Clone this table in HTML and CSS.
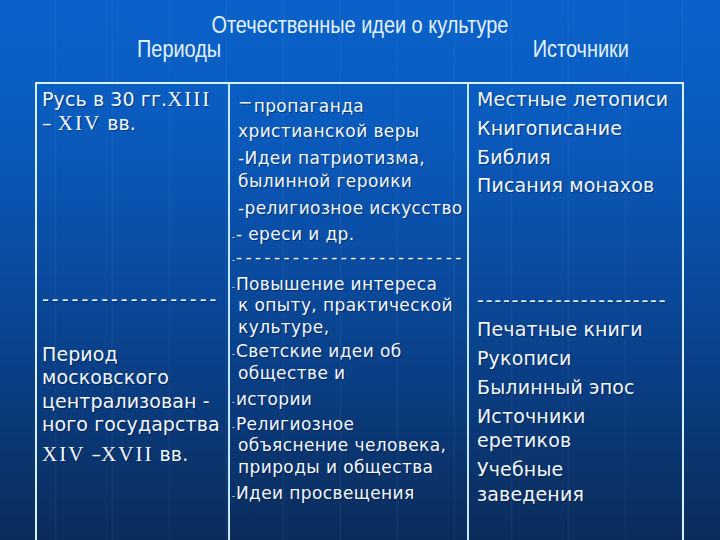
FILE: index.html
```html
<!DOCTYPE html>
<html lang="ru">
<head>
<meta charset="utf-8">
<title>Отечественные идеи о культуре</title>
<link rel="stylesheet" href="styles.css">
</head>
<body>
<div class="slide">
  <header class="head">
    <div class="title"><span class="nar">Отечественные идеи о культуре</span></div>
    <div class="subs"><span class="nar left">Периоды</span><span class="nar right">Источники</span></div>
  </header>
  <div class="table">
    <div class="col c1">
      <p class="l1">Русь в 30 гг.<span class="rn">XIII</span><br>– <span class="rn">XIV</span> вв.</p>
      <p class="dash d1">------------------</p>
      <p class="l2">Период<br>московского<br>централизован -<br>ного государства</p>
      <p class="l3"><span class="rn">XIV</span> –<span class="rn">XVII</span> вв.</p>
    </div>
    <div class="col c2">
      <p class="p1"><span class="hi">−</span>пропаганда<br>христианской веры</p>
      <p class="p2">-Идеи патриотизма,<br>былинной героики</p>
      <p class="p3">-религиозное искусство</p>
      <p class="p4"><span class="tick">-</span>- ереси и др.</p>
      <p class="dash d2"><span class="tick">-</span>------------------------</p>
      <p class="after"><span class="tick">-</span>Повышение интереса<br>к опыту, практической<br>культуре,</p>
      <p><span class="tick">-</span>Светские идеи об<br>обществе и</p>
      <p class="md"><span class="tick">-</span>истории</p>
      <p><span class="tick">-</span>Религиозное<br>объяснение человека,<br>природы и общества</p>
      <p class="md"><span class="tick">-</span>Идеи просвещения</p>
    </div>
    <div class="col c3">
      <p>Местные летописи</p>
      <p>Книгописание</p>
      <p>Библия</p>
      <p>Писания монахов</p>
      <p class="dash d3">----------------------</p>
      <p class="after">Печатные книги</p>
      <p>Рукописи</p>
      <p>Былинный эпос</p>
      <p>Источники<br>еретиков</p>
      <p>Учебные<br>заведения</p>
    </div>
  </div>
</div>
</body>
</html>
```
FILE: styles.css
```css
* { box-sizing: border-box; }
html, body { margin: 0; padding: 0; }
body {
  width: 720px;
  height: 540px;
  overflow: hidden;
  background:
    repeating-linear-gradient(90deg, rgba(255,255,255,0) 0, rgba(255,255,255,0) 54px, rgba(160,210,255,0.05) 55px, rgba(255,255,255,0) 57px),
    linear-gradient(180deg, #0a62ca 0%, #0a5abc 25%, #0a4ba0 50%, #0a3b7d 75%, #0b2c5a 100%);
  font-family: "DejaVu Sans", Verdana, sans-serif;
  color: #f2f8ff;
}
.slide { width: 720px; height: 540px; }

.head {
  padding-top: 13px;
  font-family: "Liberation Sans", Arial, sans-serif;
  font-size: 24px;
  line-height: 24px;
  color: #e2f1ff;
}
.nar { display: inline-block; transform: scaleX(0.83); }
.title { text-align: center; }
.title .nar { transform-origin: center; }
.subs {
  display: flex;
  justify-content: space-between;
  padding: 0 91px 0 137px;
}
.subs .left { transform-origin: left center; }
.subs .right { transform-origin: right center; }

.table {
  margin: 21px 0 0 35px;
  width: 649px;
  height: 480px;
  border: 2px solid #d6f2ff;
  border-bottom: 0;
  display: grid;
  grid-template-columns: 191px 239px 1fr;
}
.col + .col { border-left: 2px solid #c4e9ff; }

p { margin: 0; white-space: nowrap; }
.col p { text-shadow: 1px 1px 1px rgba(0, 10, 50, 0.45); }
.rn { font-family: "Liberation Serif", "Times New Roman", serif; font-size: 21px; letter-spacing: 2px; }

/* left column */
.c1 { font-size: 19px; letter-spacing: 0.1px; padding: 3px 0 0 5px; }
.c1 .l1 { line-height: 24px; }
.c1 .d1 { line-height: 24px; margin-top: 152px; letter-spacing: 3px; }
.c1 .l2 { line-height: 23.3px; margin-top: 32px; }
.c1 .l3 { line-height: 23.3px; margin-top: 7px; }

/* middle column */
.c2 { font-size: 17px; letter-spacing: 0.4px; line-height: 21.5px; padding: 10.25px 0 0 8px; }
.c2 p + p { margin-top: 3px; }
.c2 p.p1 { line-height: 25px; }
.c2 p.p2 { line-height: 23px; margin-top: 3px; }
.c2 p.p3 { line-height: 24px; margin-top: 2.5px; }
.c2 p.p4 { line-height: 24px; margin-top: 2px; }
.c2 p.d2 { margin-top: 1.25px; letter-spacing: 3.4px; }
.c2 p.after { margin-top: 5px; }
.c2 p.md { margin-top: 5px; }
.hi { line-height: 0; vertical-align: 4px; margin-right: 1px; }
.tick { font-size: 8px; line-height: 0; margin-left: -6px; margin-right: 1px; letter-spacing: 0; }

/* right column */
.c3 { font-size: 19px; letter-spacing: 0.15px; line-height: 24.5px; padding: 3px 0 0 8px; }
.c3 p + p { margin-top: 4.3px; }
.c3 p.d3 { margin-top: 90px; letter-spacing: 1.8px; }
.c3 p.after { margin-top: 5px; }
```
